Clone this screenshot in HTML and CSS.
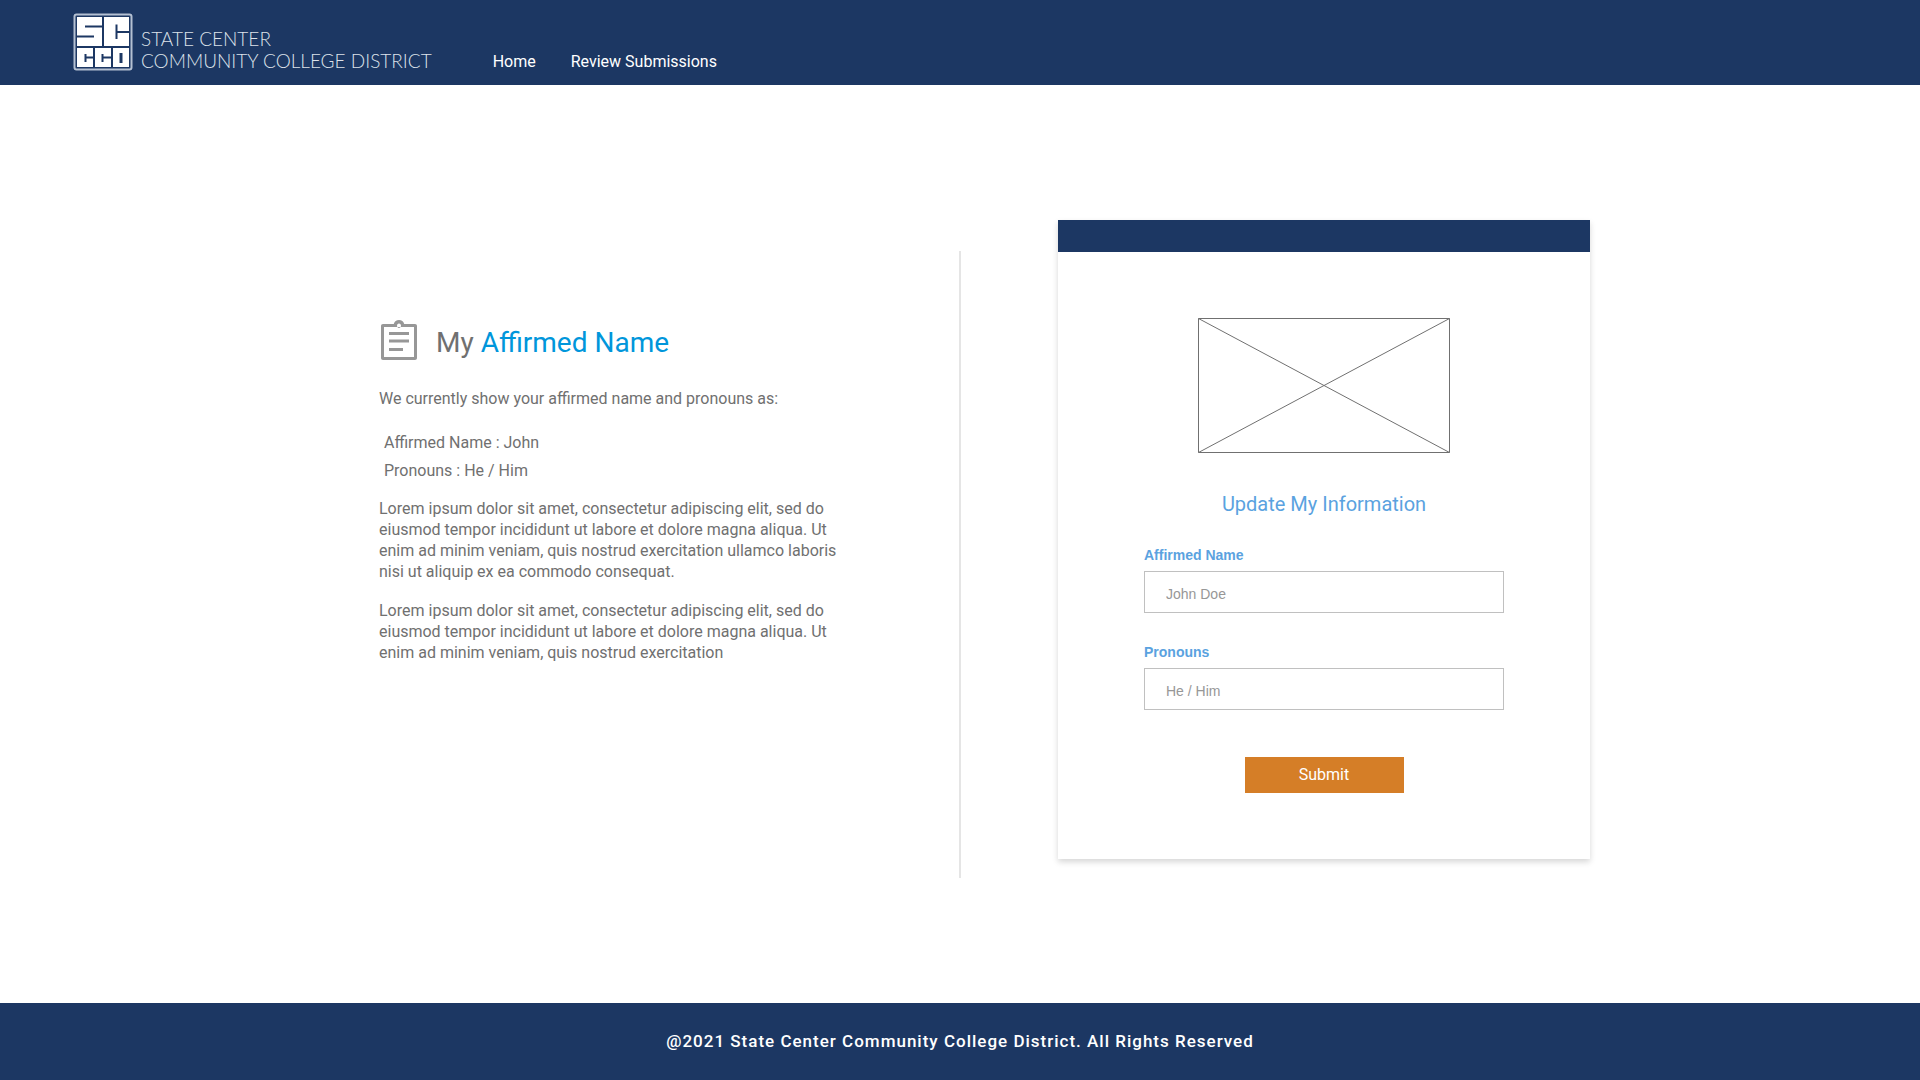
FILE: index.html
```html
<!DOCTYPE html>
<html lang="en">
<head>
  <meta charset="utf-8">
  <meta name="viewport" content="width=device-width, initial-scale=1">
  <title>My Affirmed Name</title>
  <link rel="stylesheet" href="styles.css">
</head>
<body>
  <header class="site-header">
    <a class="brand" href="#">
      <svg class="brand-mark" viewBox="0 0 60 60" aria-hidden="true">
        <rect class="mark-frame" x="1.5" y="2.500" width="57" height="55" rx="2"/>
        <path class="mark-fill" d="M4 5h25v29H4zM31 5h25v29H31zM4 36h16v19H4zM22 36h16v19H22zM40 36h16v19H40z"/>
        <path class="mark-cut" d="M12 14.500H29M4 24.500H21M43.500 12.500V27M43.500 20H56M12.500 42V50M12.500 45.500H20M29.500 42V50M29.500 45.500H38"/>
        <path class="mark-counter" d="M48 41V51"/>
      </svg>
      <span class="brand-name">STATE CENTER<br>COMMUNITY COLLEGE DISTRICT</span>
    </a>
    <nav class="nav">
      <a href="#">Home</a>
      <a href="#">Review Submissions</a>
    </nav>
  </header>

  <main class="content">
    <section class="info">
      <div class="info-body">
        <div class="info-heading">
          <svg class="info-icon" viewBox="0 0 24 24" aria-hidden="true">
            <path d="M7 15h7v1.500H7zm0-4.250h10v1.500H7zM7 7h10v1.500H7zM20 3h-5.400C14.300 1.800 13.300 1 12 1s-2.300.800-2.600 2H4c-.600 0-1 .400-1 1v16c0 .600.400 1 1 1h16c.600 0 1-.400 1-1V4c0-.600-.400-1-1-1zm-8-.250c.600 0 1 .500 1 1.100s-.400 1.100-1 1.100-1-.500-1-1.100.400-1.100 1-1.100zM19.500 19.500h-15v-15h15v15z"/>
          </svg>
          <h1>My <span>Affirmed Name</span></h1>
        </div>
        <p class="lead">We currently show your affirmed name and pronouns as:</p>
        <ul class="current">
          <li>Affirmed Name : John</li>
          <li>Pronouns : He / Him</li>
        </ul>
        <p>Lorem ipsum dolor sit amet, consectetur adipiscing elit, sed do eiusmod tempor incididunt ut labore et dolore magna aliqua. Ut enim ad minim veniam, quis nostrud exercitation ullamco laboris nisi ut aliquip ex ea commodo consequat.</p>
        <p>Lorem ipsum dolor sit amet, consectetur adipiscing elit, sed do eiusmod tempor incididunt ut labore et dolore magna aliqua. Ut enim ad minim veniam, quis nostrud exercitation</p>
      </div>
    </section>

    <div class="divider"></div>

    <section class="update">
      <form class="card">
        <div class="card-bar"></div>
        <div class="card-body">
          <svg class="placeholder" viewBox="0 0 252 135" aria-hidden="true">
            <path d="M.5.500H251.500V134.500H.5zM.5.500L251.500 134.500M251.500.500L.5 134.500"/>
          </svg>
          <h2>Update My Information</h2>
          <div class="field">
            <label for="name">Affirmed Name</label>
            <input id="name" type="text" placeholder="John Doe">
          </div>
          <div class="field">
            <label for="pronouns">Pronouns</label>
            <input id="pronouns" type="text" placeholder="He / Him">
          </div>
          <button class="submit" type="submit">Submit</button>
        </div>
      </form>
    </section>
  </main>

  <footer class="site-footer">@2021 State Center Community College District. All Rights Reserved</footer>
</body>
</html>
```
FILE: styles.css
```css
* {
  box-sizing: border-box;
}

body {
  margin: 0;
  min-height: 100vh;
  display: flex;
  flex-direction: column;
  background: #fff;
  color: #707070;
  font: 16px/21px Roboto, sans-serif;
}

h1, h2, p, ul {
  margin: 0;
  font-weight: 400;
}

.site-header {
  display: flex;
  align-items: flex-start;
  gap: 61px;
  min-height: 85px;
  padding: 12px 73px;
  background: #1c3763;
}

.brand {
  display: flex;
  gap: 8px;
  color: #dde2ea;
  text-decoration: none;
}

.brand-mark {
  width: 60px;
  height: 60px;
  fill: none;
}

.mark-frame {
  stroke: #b4c0d2;
  stroke-width: 2;
}

.mark-fill {
  fill: #fff;
}

.mark-cut {
  stroke: #1c3763;
  stroke-width: 2;
}

.mark-counter {
  stroke: #1c3763;
  stroke-width: 3;
}

.brand-name {
  padding-top: 16px;
  font: 300 19px/22px Lato, sans-serif;
  white-space: nowrap;
}

.nav {
  display: flex;
  gap: 35px;
  padding-top: 39px;
}

.nav a {
  color: #fff;
  text-decoration: none;
}

.content {
  flex: 1;
  display: grid;
  grid-template-columns: 1fr 2px 1fr;
  align-items: start;
  padding: 135px 0 125px;
}

.info {
  display: flex;
  justify-content: flex-end;
  padding: 98px 116px 0 24px;
}

.info-body {
  max-width: 464px;
}

.info-heading {
  display: flex;
  align-items: center;
  gap: 13px;
  margin: 0 0 22px -4px;
}

.info-icon {
  width: 48px;
  height: 48px;
  fill: #979797;
}

.info-heading h1 {
  padding-top: 2px;
  font-size: 28px;
  line-height: 40px;
}

.info-heading span {
  color: #0096db;
}

.info p + p {
  margin-top: 18px;
}

.current {
  display: grid;
  gap: 7px;
  margin: 23px 0 17px;
  padding: 0 0 0 5px;
  list-style: none;
}

.divider {
  align-self: stretch;
  margin-top: 31px;
  background: #e5e5e5;
}

.update {
  padding: 0 24px 0 97px;
}

.card {
  max-width: 532px;
  background: #fff;
  box-shadow: 0 3px 6px rgba(0, 0, 0, 0.16);
}

.card-bar {
  height: 32px;
  background: #1c3763;
}

.card-body {
  display: flex;
  flex-direction: column;
  align-items: center;
  padding: 66px 24px;
}

.placeholder {
  width: 252px;
  height: 135px;
  fill: none;
  stroke: #707070;
}

.card h2 {
  margin: 39px 0 31px;
  color: #5aa2e0;
  font-size: 20px;
  line-height: 24px;
}

.field {
  display: flex;
  flex-direction: column;
  gap: 8px;
  width: 100%;
  max-width: 360px;
  margin-bottom: 31px;
}

.field label {
  color: #5aa2e0;
  font: bold 14px/16px "Liberation Sans", sans-serif;
}

.field input {
  height: 42px;
  padding: 4px 21px 0;
  border: 1px solid #c0c0c0;
  border-radius: 0;
  background: #fff;
  color: #333;
  font: 14px/16px "Liberation Sans", sans-serif;
}

.field input::placeholder {
  color: #979797;
}

.submit {
  width: 159px;
  height: 36px;
  margin-top: 16px;
  padding: 0;
  border: 0;
  background: #d57e27;
  color: #fff;
  font: 16px/20px Roboto, sans-serif;
}

.site-footer {
  padding: 28px 24px;
  background: #1c3763;
  color: #fff;
  font-size: 17px;
  font-weight: 500;
  letter-spacing: 1px;
  text-align: center;
}
```
